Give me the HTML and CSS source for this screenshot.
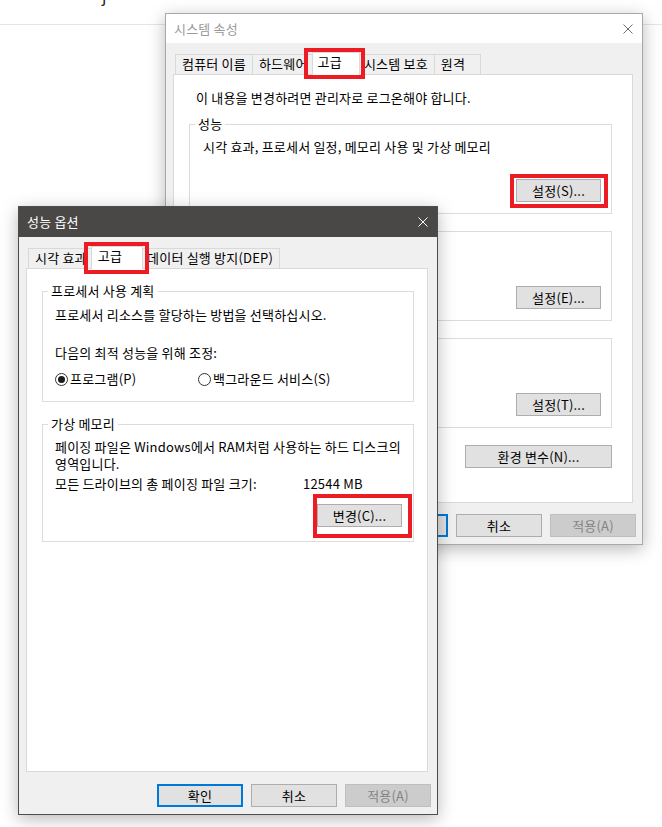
FILE: index.html
```html
<!doctype html>
<html>

<head>
	<meta charset="utf-8">
	<title>시스템 속성 - 성능 옵션</title>
	<link rel="stylesheet" href="styles.css">
</head>

<body>
	<div class="header"><span>j</span></div>

	<!-- 뒤쪽 창: 시스템 속성 -->
	<div class="win win-sys">
		<div class="titlebar">
			<span>시스템 속성</span>
			<svg class="close" width="10" height="10" viewBox="0 0 10 10"><path d="M0.5 0.5L9.5 9.5M9.5 0.5L0.5 9.5" /></svg>
		</div>
		<div class="winbody">
			<div class="tabs">
				<div class="tab">컴퓨터 이름</div>
				<div class="tab">하드웨어</div>
				<div class="tab on">고급</div>
				<div class="tab">시스템 보호</div>
				<div class="tab">원격</div>
			</div>
			<div class="panel">
				<p class="note">이 내용을 변경하려면 관리자로 로그온해야 합니다.</p>
				<fieldset class="group">
					<legend>성능</legend>
					<div class="gbody">
						<p>시각 효과, 프로세서 일정, 메모리 사용 및 가상 메모리</p>
						<div class="btnrow"><button>설정(S)...</button></div>
					</div>
				</fieldset>
				<!-- 앞 창에 가려진 그룹 -->
				<fieldset class="group">
					<legend class="blank"></legend>
					<div class="gbody">
						<p class="blank"></p>
						<div class="btnrow"><button>설정(E)...</button></div>
					</div>
				</fieldset>
				<fieldset class="group">
					<legend class="blank"></legend>
					<div class="gbody">
						<p class="blank"></p>
						<div class="btnrow"><button>설정(T)...</button></div>
					</div>
				</fieldset>
				<div class="envrow"><button class="wide">환경 변수(N)...</button></div>
			</div>
			<div class="actions">
				<button class="def">확인</button>
				<button>취소</button>
				<button class="off">적용(A)</button>
			</div>
		</div>
	</div>

	<!-- 앞쪽 창: 성능 옵션 -->
	<div class="win win-perf">
		<div class="titlebar">
			<span>성능 옵션</span>
			<svg class="close" width="10" height="10" viewBox="0 0 10 10"><path d="M0.5 0.5L9.5 9.5M9.5 0.5L0.5 9.5" /></svg>
		</div>
		<div class="winbody">
			<div class="tabs">
				<div class="tab">시각 효과</div>
				<div class="tab on">고급</div>
				<div class="tab">데이터 실행 방지(DEP)</div>
			</div>
			<div class="panel">
				<fieldset class="group">
					<legend>프로세서 사용 계획</legend>
					<div class="gbody cpu">
						<p>프로세서 리소스를 할당하는 방법을 선택하십시오.</p>
						<p class="adjust">다음의 최적 성능을 위해 조정:</p>
						<div class="radios">
							<label class="radio"><span class="circle"><span class="dot"></span></span>프로그램(P)</label>
							<label class="radio"><span class="circle"></span>백그라운드 서비스(S)</label>
						</div>
					</div>
				</fieldset>
				<fieldset class="group vm">
					<legend>가상 메모리</legend>
					<div class="gbody mem">
						<p class="desc">페이징 파일은 Windows에서 RAM처럼 사용하는 하드 디스크의<br>영역입니다.</p>
						<div class="size"><span>모든 드라이브의 총 페이징 파일 크기:</span><span>12544 MB</span></div>
						<div class="btnrow"><button>변경(C)...</button></div>
					</div>
				</fieldset>
			</div>
			<div class="actions">
				<button class="def">확인</button>
				<button>취소</button>
				<button class="off">적용(A)</button>
			</div>
		</div>
	</div>

	<!-- 빨간 표시 -->
	<div class="mark mark-tab1"></div>
	<div class="mark mark-set"></div>
	<div class="mark mark-tab2"></div>
	<div class="mark mark-change"></div>
</body>

</html>
```

FILE: styles.css
```css
* {
	margin: 0;
	padding: 0;
	box-sizing: border-box;
}

body {
	width: 662px;
	height: 827px;
	overflow: hidden;
	position: relative;
	background: #fff;
	color: #000;
	font-family: "Noto Sans CJK KR", "Malgun Gothic", sans-serif;
	font-size: 13px;
	letter-spacing: 0.2px;
}

.header {
	height: 25px;
	border-bottom: 1px solid #e5e5e5;
	overflow: hidden;
}

.header span {
	display: block;
	margin: -13px 0 0 102px;
	font-size: 16px;
	line-height: 16px;
	color: #222;
}

/* 창 */
.win {
	position: absolute;
	display: flex;
	flex-direction: column;
	background: #f0f0f0;
	box-shadow: 0 4px 16px rgba(0, 0, 0, 0.28);
}

.win-sys {
	left: 165px;
	top: 13px;
	width: 478px;
	height: 532px;
	border: 1px solid #a9a9a9;
	z-index: 1;
}

.win-perf {
	left: 18px;
	top: 206px;
	width: 420px;
	height: 609px;
	border: 1px solid #4f4d4b;
	z-index: 2;
}

.titlebar {
	height: 29px;
	display: flex;
	align-items: center;
	justify-content: space-between;
	padding: 0 9px 0 8px;
	background: #fff;
	color: #9a9a9a;
	line-height: 16px;
}

.titlebar .close {
	stroke: #6e6e6e;
	stroke-width: 1;
	fill: none;
}

.win-perf .titlebar {
	height: 30px;
	background: #4a4846;
	color: #fff;
}

.win-perf .titlebar .close {
	stroke: #fff;
}

.winbody {
	padding: 11px 0 0 7px;
}

/* 탭 */
.tabs {
	display: flex;
	align-items: flex-end;
	height: 20px;
	padding-left: 2px;
	position: relative;
	z-index: 1;
}

.tab {
	min-width: 47px;
	height: 20px;
	padding: 0 6px;
	margin-right: -1px;
	border: 1px solid #d9d9d9;
	border-bottom: 0;
	background: #f0f0f0;
	line-height: 18px;
	white-space: nowrap;
}

.tab.on {
	height: 23px;
	margin: 0 -3px -1px -2px;
	padding: 0 17px 0 5px;
	background: #fff;
	position: relative;
	z-index: 1;
}

.win-perf .tab.on {
	padding: 0 20px 0 6px;
}

.panel {
	background: #fff;
	border: 1px solid #d9d9d9;
}

.win-sys .panel {
	width: 460px;
	height: 429px;
	padding: 15px 20px 0 15px;
}

.win-perf .panel {
	width: 402px;
	height: 504px;
	padding: 14px 13px 0 15px;
}

.note {
	line-height: 16px;
	padding-left: 7px;
}

/* 그룹 상자 */
.group {
	border: 1px solid #dcdcdc;
	min-width: 0;
	margin-top: 10px;
}

.group + .group {
	margin-top: 9px;
}

.win-perf .group {
	margin-top: 0;
}

.win-perf .group.vm {
	margin-top: 14px;
}

.group legend {
	margin-left: 5px;
	padding: 0 3px;
	line-height: 16px;
}

.group legend.blank {
	height: 16px;
	padding: 0;
}

.gbody {
	padding: 7px 10px 11px 13px;
}

.gbody p {
	line-height: 16px;
	white-space: nowrap;
}

.gbody p.blank {
	height: 16px;
}

.btnrow {
	display: flex;
	justify-content: flex-end;
	margin-top: 24px;
}

.gbody.cpu {
	padding: 8px 11px 14px 12px;
}

.adjust {
	margin-top: 22px;
}

.radios {
	display: flex;
	margin-top: 10px;
	line-height: 16px;
}

.radio {
	display: flex;
	align-items: center;
	gap: 2px;
}

.radio:first-child {
	width: 143px;
}

.circle {
	width: 13px;
	height: 13px;
	border: 1px solid #333;
	border-radius: 50%;
	display: flex;
	align-items: center;
	justify-content: center;
	background: #fff;
}

.dot {
	width: 7px;
	height: 7px;
	border-radius: 50%;
	background: #1b1b1b;
}

.gbody.mem {
	padding: 6px 11px 14px 12px;
}

.gbody .desc {
	line-height: 17px;
}

.size {
	display: flex;
	margin-top: 4px;
	line-height: 16px;
}

.size span:first-child {
	width: 248px;
}

.mem .btnrow {
	margin-top: 12px;
}

.envrow {
	display: flex;
	justify-content: flex-end;
	margin-top: 17px;
}

/* 버튼 */
button {
	width: 85px;
	height: 23px;
	border: 1px solid #adadad;
	background: #e1e1e1;
	color: #000;
	font: inherit;
	letter-spacing: inherit;
	line-height: 21px;
	padding: 0;
}

button.wide {
	width: 147px;
}

.actions {
	display: flex;
	justify-content: flex-end;
	gap: 8px;
	margin-top: 11px;
	padding-right: 6px;
}

.win-perf .actions {
	margin-top: 12px;
}

.actions button {
	width: 86px;
}

button.def {
	border: 2px solid #0078d7;
	line-height: 19px;
}

button.off {
	background: #cccccc;
	border-color: #bfbfbf;
	color: #838383;
}

/* 빨간 표시 상자 */
.mark {
	position: absolute;
	border: 4px solid #ed1c24;
	z-index: 5;
}

.mark-tab1 {
	left: 304px;
	top: 48px;
	width: 61px;
	height: 31px;
}

.mark-set {
	left: 510px;
	top: 174px;
	width: 98px;
	height: 34px;
}

.mark-tab2 {
	left: 84px;
	top: 242px;
	width: 65px;
	height: 32px;
}

.mark-change {
	left: 313px;
	top: 494px;
	width: 99px;
	height: 44px;
}
```
